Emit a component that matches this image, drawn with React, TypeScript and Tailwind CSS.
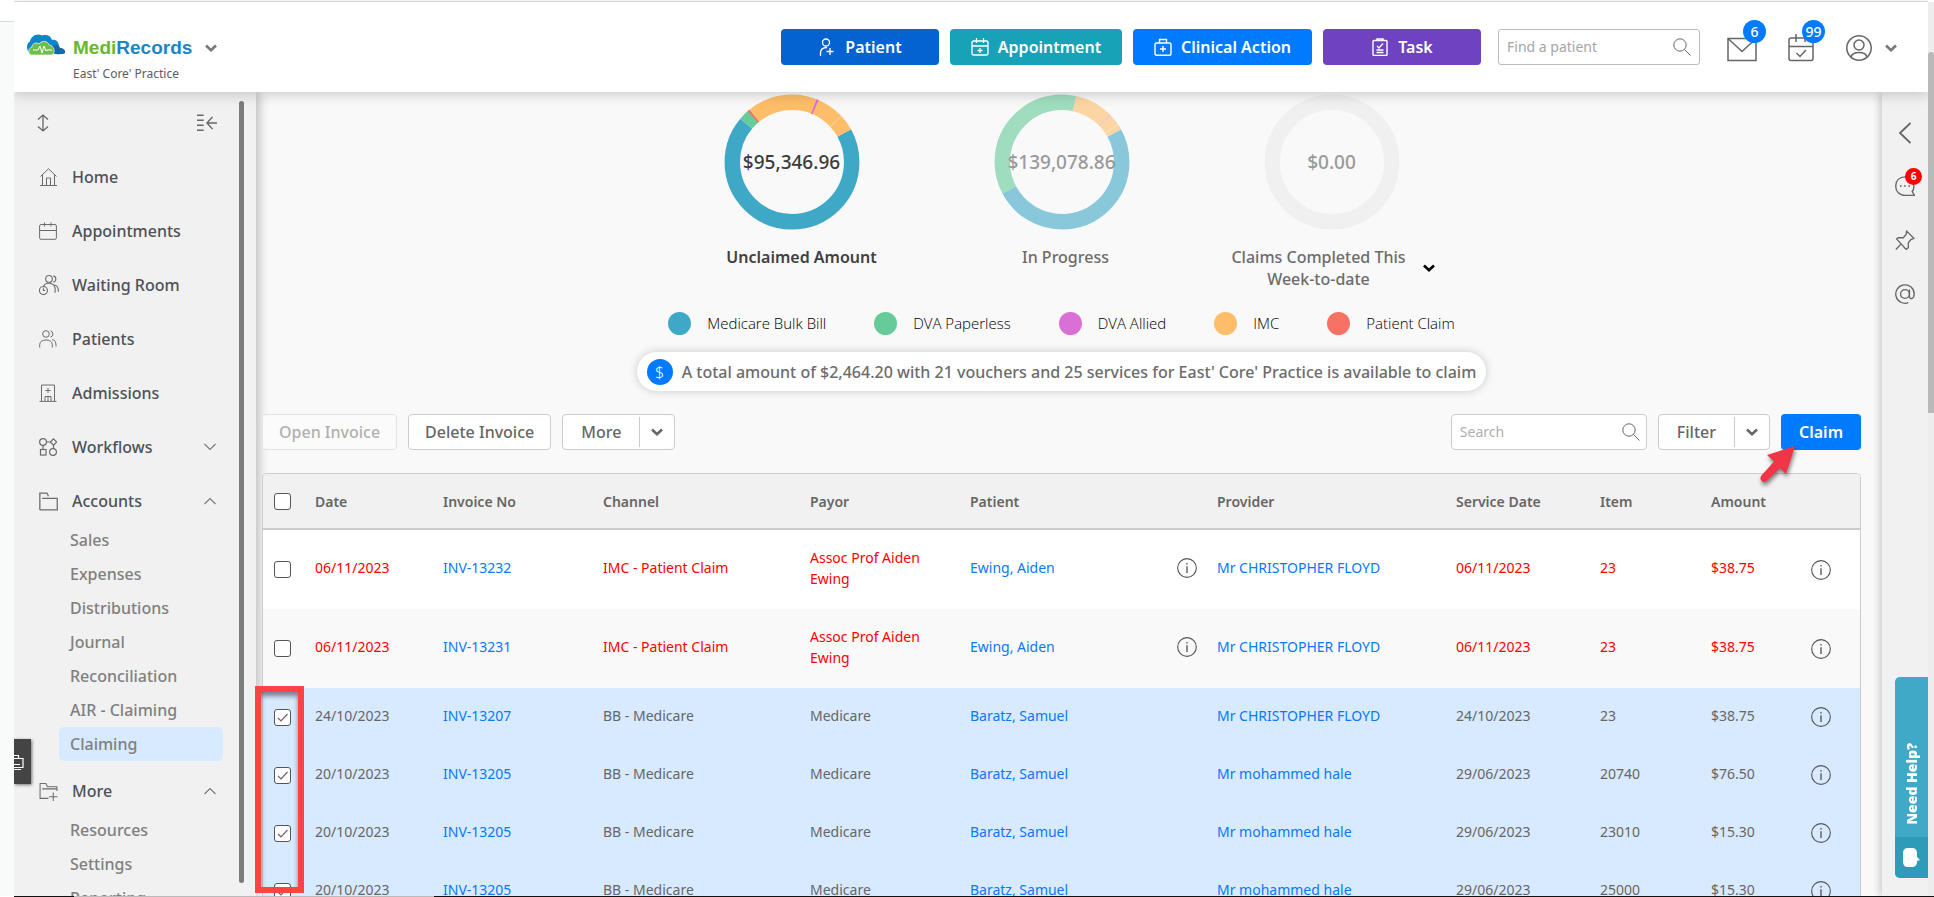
import type { ReactNode } from "react";

type IconProps = {
    size?: number;
    className?: string;
    width?: number;
    children?: ReactNode;
};

type Segment = {
    color: string;
    from: number;
    to: number;
};

type Row = {
    date: string;
    invoice: string;
    channel: string;
    payor: string;
    patient: string;
    provider: string;
    serviceDate: string;
    item: string;
    amount: string;
    alert?: boolean;
    checked?: boolean;
};

const colors = {
    bulk: "#40a8c7",
    dva: "#66cb99",
    allied: "#da6fd6",
    imc: "#febe69",
    patient: "#f67265",
};

const legend = [
    { label: "Medicare Bulk Bill", color: colors.bulk },
    { label: "DVA Paperless", color: colors.dva },
    { label: "DVA Allied", color: colors.allied },
    { label: "IMC", color: colors.imc },
    { label: "Patient Claim", color: colors.patient },
];

// degrees, clockwise from the top
const unclaimed: Segment[] = [
    { color: colors.bulk, from: 61, to: 310 },
    { color: colors.dva, from: 310, to: 320 },
    { color: colors.patient, from: 319, to: 321 },
    { color: colors.imc, from: 321, to: 360 },
    { color: colors.imc, from: 0, to: 47 },
    { color: colors.imc, from: 47.3, to: 61 },
    { color: colors.allied, from: 21.5, to: 23.3 },
];

const inProgress: Segment[] = [
    { color: colors.bulk, from: 61, to: 242 },
    { color: colors.dva, from: 242, to: 360 },
    { color: colors.dva, from: 0, to: 12.3 },
    { color: colors.imc, from: 12.3, to: 45.5 },
    { color: colors.allied, from: 45.5, to: 46.3 },
    { color: colors.imc, from: 46.3, to: 56 },
    { color: colors.imc, from: 56.3, to: 61 },
];

const accounts = [
    "Sales",
    "Expenses",
    "Distributions",
    "Journal",
    "Reconciliation",
    "AIR - Claiming",
    "Claiming",
];

const more = ["Resources", "Settings", "Reporting"];

const rows: Row[] = [
    { date: "06/11/2023", invoice: "INV-13232", channel: "IMC - Patient Claim", payor: "Assoc Prof Aiden Ewing", patient: "Ewing, Aiden", provider: "Mr CHRISTOPHER FLOYD", serviceDate: "06/11/2023", item: "23", amount: "$38.75", alert: true },
    { date: "06/11/2023", invoice: "INV-13231", channel: "IMC - Patient Claim", payor: "Assoc Prof Aiden Ewing", patient: "Ewing, Aiden", provider: "Mr CHRISTOPHER FLOYD", serviceDate: "06/11/2023", item: "23", amount: "$38.75", alert: true },
    { date: "24/10/2023", invoice: "INV-13207", channel: "BB - Medicare", payor: "Medicare", patient: "Baratz, Samuel", provider: "Mr CHRISTOPHER FLOYD", serviceDate: "24/10/2023", item: "23", amount: "$38.75", checked: true },
    { date: "20/10/2023", invoice: "INV-13205", channel: "BB - Medicare", payor: "Medicare", patient: "Baratz, Samuel", provider: "Mr mohammed hale", serviceDate: "29/06/2023", item: "20740", amount: "$76.50", checked: true },
    { date: "20/10/2023", invoice: "INV-13205", channel: "BB - Medicare", payor: "Medicare", patient: "Baratz, Samuel", provider: "Mr mohammed hale", serviceDate: "29/06/2023", item: "23010", amount: "$15.30", checked: true },
    { date: "20/10/2023", invoice: "INV-13205", channel: "BB - Medicare", payor: "Medicare", patient: "Baratz, Samuel", provider: "Mr mohammed hale", serviceDate: "29/06/2023", item: "25000", amount: "$15.30", checked: true },
];

function Icon({ size = 18, width = 1, className = "", children }: IconProps) {
    return (
        <svg
            width={size}
            height={size}
            viewBox="0 0 18 18"
            fill="none"
            stroke="currentColor"
            strokeWidth={width}
            className={`shrink-0 ${className}`}
        >
            {children}
        </svg>
    );
}

function Chevron({ up, bold, className = "" }: { up?: boolean; bold?: boolean; className?: string }) {
    return (
        <svg
            width="14"
            height="10"
            viewBox="0 0 14 10"
            fill="none"
            stroke="currentColor"
            strokeWidth={bold ? 2.6 : 1.1}
            className={`shrink-0 ${className}`}
        >
            {bold ? (
                <path d="M2 2.5 7 7.2l5-4.7" />
            ) : (
                <path d={up ? "M1.5 8 7 2.5 12.5 8" : "M1.5 2 7 7.5 12.5 2"} />
            )}
        </svg>
    );
}

function SearchIcon() {
    return (
        <Icon className="text-[#666]">
            <circle cx="7" cy="7" r="6.2" />
            <path d="m11.5 11.5 6 6" />
        </Icon>
    );
}

function InfoIcon() {
    return (
        <Icon size={20} className="text-[#555]">
            <circle cx="9" cy="9" r="8.4" />
            <path d="M9 7.4v6M9 4.4v1.5" strokeWidth="1.2" />
        </Icon>
    );
}

function Donut({ amount, segments, faded }: { amount: string; segments: Segment[]; faded?: boolean }) {
    return (
        <div className="grid size-[136px] place-items-center *:[grid-area:1/1]">
            <svg
                viewBox="0 0 136 136"
                className={`size-full -rotate-90 ${faded ? "opacity-60" : ""}`}
                fill="none"
                strokeWidth="15.5"
            >
                {segments.length === 0 && (
                    <circle cx="68" cy="68" r="59.7" stroke="#ebebeb" />
                )}
                {segments.map((s, i) => (
                    <circle
                        key={i}
                        cx="68"
                        cy="68"
                        r="59.7"
                        stroke={s.color}
                        pathLength={360}
                        strokeDasharray={`${s.to - s.from} 360`}
                        strokeDashoffset={-s.from}
                    />
                ))}
            </svg>
            <span className={`text-[19px] ${faded ? "text-[#999]" : "text-[#3c3c3c]"}`}>{amount}</span>
        </div>
    );
}

function Checkbox({ label, checked }: { label: string; checked?: boolean }) {
    return (
        <label className="ml-[11px] grid size-[17px] *:[grid-area:1/1]">
            <input
                type="checkbox"
                aria-label={label}
                defaultChecked={checked}
                className="peer size-[17px] appearance-none rounded-[3px] border border-[#555] bg-white"
            />
            <svg
                viewBox="0 0 17 17"
                fill="none"
                stroke="#666"
                strokeWidth="1.2"
                className="pointer-events-none invisible peer-checked:visible"
            >
                <path d="m4 9 3 3 6.500-7" />
            </svg>
        </label>
    );
}

function NavItem({ label, icon, open }: { label: string; icon: ReactNode; open?: boolean }) {
    return (
        <a href="#" className="flex h-[54px] items-center pr-[22px] pl-[25px] text-[#4c5257]">
            <span className="w-[33px] text-[#6c6c6c]">{icon}</span>
            <span className="grow">{label}</span>
            {open !== undefined && <Chevron up={open} className="text-[#777]" />}
        </a>
    );
}

function SubNav({ items, active }: { items: string[]; active?: string }) {
    return (
        <ul className="-mt-[5px] pr-4 pl-[45px]">
            {items.map((item) => (
                <li key={item}>
                    <a
                        href="#"
                        className={`flex h-[34px] items-center rounded-[5px] pl-[11px] text-[#808080] ${item === active ? "bg-[#d8eaff]" : ""}`}
                    >
                        {item}
                    </a>
                </li>
            ))}
        </ul>
    );
}

function Logo() {
    return (
        <svg width="40" height="22" viewBox="0 0 40 22" className="shrink-0">
            <path d="M4 19C0 17 0 9 4 7.5 5 2 11-1 16 1.5 21 0 25 2 26 6c4-1 6 2 7 5l-8 8z" fill="#0d86cc" />
            <path d="M22 19c1-3 2-5 5-6 2-3 6-3 7 1 3 0 6 2 5 5-1 2-14 1-17 0z" fill="#1467a8" />
            <path d="M5 21c-3-1-3-7 1-8 0-4 5-5 7-3 3-4 9-3 10 1 5 0 7 8 3 10z" fill="#6cc04a" stroke="#fff" strokeWidth=".7" />
            <path d="M7 16h5l2-4 2 7 2-7 2 5 1-1h5" fill="none" stroke="#fff" strokeWidth="1" />
        </svg>
    );
}

function Header() {
    const button = "flex h-9 items-center justify-center gap-[9px] rounded-[4px] text-base font-semibold text-white";
    return (
        <header className="relative z-20 flex h-[91px] shrink-0 items-start border-t border-[#d5d9d9] bg-white shadow-[0_3px_12px_rgba(0,0,0,0.18)]">
            <div className="flex grow items-start pt-8 pl-3">
                <Logo />
                <div className="ml-[7px] flex flex-col text-[#5c5c5c]">
                    <button className="flex h-7 items-center gap-3">
                        <span className="font-['Liberation_Sans',sans-serif] text-[19px] font-bold text-[#1c86c4]">
                            <span className="text-[#65b92f]">Medi</span>Records
                        </span>
                        <Chevron bold className="text-[#777]" />
                    </button>
                    <span className="text-xs leading-6 font-normal">East' Core' Practice</span>
                </div>
            </div>
            <div className="flex gap-[11px] pt-[27px]">
                <button className={`${button} w-[158px] bg-[#0463d1]`}>
                    <Icon width={1.3}>
                        <circle cx="8" cy="4.5" r="3.5" />
                        <path d="M2.5 18v-3c0-4 3-5.5 6.5-5.5M12 10v7M8.5 13.5h7" />
                    </Icon>
                    Patient
                </button>
                <button className={`${button} w-[172px] bg-[#18a2b8]`}>
                    <Icon width={1.3}>
                        <rect x="1" y="3" width="16" height="14" rx="1.5" />
                        <path d="M1 8h16M5.5 0v5M12.5 0v5M9 10v5M6.5 12.5h5" />
                    </Icon>
                    Appointment
                </button>
                <button className={`${button} w-[179px] bg-[#007bff]`}>
                    <Icon width={1.4}>
                        <rect x="1" y="5" width="16" height="12.3" rx="1.5" />
                        <path d="M5.5 5V1.5h7V5M9 8v6M6 11h6" />
                    </Icon>
                    Clinical Action
                </button>
                <button className={`${button} w-[158px] bg-[#6f42c1]`}>
                    <Icon width={1.4}>
                        <rect x="2" y="2.5" width="14" height="15" rx="1" />
                        <path d="M6 3V1h6v2M6 8l2 2 4-4.5M5.5 12h7M5.5 14.5h7" />
                    </Icon>
                    Task
                </button>
            </div>
            <label className="mt-[27px] ml-[17px] flex h-9 w-[202px] items-center rounded-[3px] border border-[#bbb] bg-white px-2">
                <input
                    type="text"
                    aria-label="Find a patient"
                    placeholder="Find a patient"
                    className="min-w-0 grow text-sm font-normal outline-none placeholder:text-[#a5a5a5]"
                />
                <SearchIcon />
            </label>
            <div className="flex items-center pt-8 pr-[30px] pl-[27px] text-[#666]">
                <button aria-label="Messages" className="relative">
                    <svg width="30" height="28" viewBox="0 0 30 28" fill="none" stroke="currentColor" strokeWidth="1.5">
                        <path d="M1 4.5h28v22H1zM1 4.5l14 13 14-13" />
                    </svg>
                    <span className="absolute -top-3.5 left-4 grid size-[23px] place-items-center rounded-full bg-[#007bff] text-sm text-white">6</span>
                </button>
                <button aria-label="Tasks" className="relative ml-[31px]">
                    <svg width="26" height="28" viewBox="0 0 26 28" fill="none" stroke="currentColor" strokeWidth="1.5">
                        <rect x="1" y="4" width="24" height="22.5" rx="2" />
                        <path d="M1 12.5h24M8 0v8M17 0v8M8.5 19l3.5 3.5 6-6.5" />
                    </svg>
                    <span className="absolute -top-3.5 left-3.5 grid size-[23px] place-items-center rounded-full bg-[#007bff] text-sm text-white">99</span>
                </button>
                <button aria-label="Profile" className="ml-8 flex items-center gap-3">
                    <svg width="26" height="28" viewBox="0 0 26 28" fill="none" stroke="currentColor" strokeWidth="1.5">
                        <circle cx="13" cy="14" r="12.2" />
                        <circle cx="13" cy="11" r="5" />
                        <path d="M5 23c1-4 4-4.5 8-4.5s7 .5 8 4.5" />
                    </svg>
                    <Chevron bold className="text-[#777]" />
                </button>
            </div>
        </header>
    );
}

function Sidebar() {
    return (
        <aside className="relative z-10 flex w-[242px] shrink-0 bg-[#f1f1f1] shadow-[3px_0_10px_rgba(0,0,0,0.25)]">
            <nav className="w-[225px] overflow-hidden text-base">
                <div className="flex h-[58px] items-center justify-between pt-1 pr-[22px] pl-5 text-[#666]">
                    <button aria-label="Expand all">
                        <Icon width={1.3}>
                            <path d="M9 1v16M4 5.5 9 1l5 4.5M4 12.5 9 17l5-4.5" />
                        </Icon>
                    </button>
                    <button aria-label="Collapse menu">
                        <Icon size={20} width={1.3}>
                            <path d="M0 2h6M0 6.5h6M0 11h6M0 15.5h6M18 9H9.5M14 3.5 9 9l5 5.5" />
                        </Icon>
                    </button>
                </div>
                <NavItem
                    label="Home"
                    icon={
                        <Icon>
                            <path d="M1 17.5h17M1.5 8.5 9.5.8l8 7.7M3.5 7v10M15.5 7v10M7.5 17v-7h4v7" />
                        </Icon>
                    }
                />
                <NavItem
                    label="Appointments"
                    icon={
                        <Icon>
                            <rect x=".6" y="2.5" width="16.8" height="14.8" rx="1.5" />
                            <path d="M.6 8.5h16.8M5.5.5v4M12 .5v4" />
                        </Icon>
                    }
                />
                <NavItem
                    label="Waiting Room"
                    icon={
                        <Icon size={20}>
                            <circle cx="9" cy="3.5" r="3" />
                            <path d="M13 .8a2.9 2.9 0 0 1 0 5.6M4 11c0-5 10-5 10.5 1v4M14 9c3 .5 3.5 2.5 3.5 6" />
                            <circle cx="4" cy="14" r="3.6" />
                            <path d="M4 12v2h1.5" />
                        </Icon>
                    }
                />
                <NavItem
                    label="Patients"
                    icon={
                        <Icon>
                            <circle cx="7" cy="4" r="3.3" />
                            <path d="M11.5.9a3.2 3.2 0 0 1 0 6.2M.7 17.5v-3c0-6 12.6-6 12.6 0v3M13 9.5c3 .5 4 2.5 4 6v1" />
                        </Icon>
                    }
                />
                <NavItem
                    label="Admissions"
                    icon={
                        <Icon>
                            <path d="M.5 17.4h17M2.5 17V1h13v16M9 4v5M6.5 6.5h5M6 17v-4.5h6V17M9 12.5V17" />
                        </Icon>
                    }
                />
                <NavItem
                    label="Workflows"
                    open={false}
                    icon={
                        <Icon width={1.2}>
                            <circle cx="4" cy="4" r="3.4" />
                            <path d="m14.5.8 3.2 3.2-3.2 3.2L11.3 4zM7.4 4h4M4 7.4V11M14.5 7.2v3" />
                            <rect x="1.5" y="11.5" width="5.5" height="5.5" />
                            <circle cx="14" cy="14" r="3.4" />
                        </Icon>
                    }
                />
                <NavItem
                    label="Accounts"
                    open
                    icon={
                        <Icon size={19} width={1.2}>
                            <path d="M.8 17V1h6.7l1.5 3M.8 17h16.5V6H3" />
                        </Icon>
                    }
                />
                <SubNav items={accounts} active="Claiming" />
                <div className="pt-[3px]">
                    <NavItem
                        label="More"
                        open
                        icon={
                            <Icon size={19}>
                                <path d="M9 15.5H1v-14h5.5l1.5 3h9v4M3 6.5h14M13.5 10v8M9.5 14h8" />
                            </Icon>
                        }
                    />
                    <SubNav items={more} />
                </div>
            </nav>
            {/* scroll bar */}
            <div className="mt-[9px] mb-[13px] w-[5px] rounded-full bg-[#7c7c7c]" />
            {/* remote screen tab, half tucked behind the page edge */}
            <button
                aria-label="Screen share"
                className="absolute bottom-28 left-0 grid h-[45px] w-[17px] place-items-center bg-[#444] text-white shadow-[1px_1px_3px_rgba(0,0,0,0.5)]"
            >
                <svg width="17" height="20" viewBox="0 0 17 20" fill="none" stroke="currentColor" strokeWidth="1.2">
                    <path d="M0 3.5h4.5v3M0 6.5h9v9H0M0 12.5h6M0 17.5h7" />
                </svg>
            </button>
        </aside>
    );
}

function Summary() {
    return (
        <section className="flex flex-col items-center pt-0.5">
            <div className="flex text-base">
                <div className="flex w-[270px] flex-col items-center gap-4">
                    <Donut amount="$95,346.96" segments={unclaimed} />
                    <span className="pl-5 leading-[22px] font-semibold text-[#404040]">Unclaimed Amount</span>
                </div>
                <div className="flex w-[270px] flex-col items-center gap-4">
                    <Donut amount="$139,078.86" segments={inProgress} faded />
                    <span className="pl-2 leading-[22px] text-[#6c6c6c]">In Progress</span>
                </div>
                <div className="flex w-[270px] flex-col items-center gap-4">
                    <Donut amount="$0.00" segments={[]} faded />
                    <button className="flex items-center gap-4 pl-1 leading-[22px] text-[#6c6c6c]">
                        <span>
                            Claims Completed This
                            <br />
                            Week-to-date
                        </span>
                        <Chevron bold className="text-black" />
                    </button>
                </div>
            </div>
            <ul className="mt-[21px] flex gap-12 font-['Open_Sans',sans-serif] text-[15px] leading-6 font-light text-black">
                {legend.map((l) => (
                    <li key={l.label} className="flex items-center gap-4">
                        <span className="size-[23px] rounded-full" style={{ backgroundColor: l.color }} />
                        {l.label}
                    </li>
                ))}
            </ul>
            <p className="mt-[17px] flex h-[39px] items-center gap-[9px] rounded-full bg-white px-2.5 text-base text-[#6c6c6c] shadow-[0_0_10px_rgba(0,0,0,0.2)]">
                <span className="grid size-[26px] place-items-center rounded-full bg-[#007bff] text-base font-light text-white">$</span>
                A total amount of $2,464.20 with 21 vouchers and 25 services for East' Core' Practice is available to claim
            </p>
        </section>
    );
}

function SplitButton({ label }: { label: string }) {
    return (
        <div className="flex h-9 items-center rounded-[4px] border border-[#ccc] bg-white text-[#666]">
            <button className="h-full px-[18px]">{label}</button>
            <span className="h-[30px] w-px bg-[#ccc]" />
            <button aria-label={`${label} options`} className="h-full px-2.5">
                <Chevron bold />
            </button>
        </div>
    );
}

function Toolbar() {
    return (
        <div className="mt-[23px] flex items-center gap-[11px] text-base">
            <button disabled className="h-9 rounded-[4px] border border-[#e2e2e2] bg-[#fbfbfb] px-4 text-[#b0b0b0]">
                Open Invoice
            </button>
            <button className="h-9 rounded-[4px] border border-[#ccc] bg-white px-4 text-[#666]">Delete Invoice</button>
            <SplitButton label="More" />
            <label className="ml-auto flex h-9 w-[196px] items-center rounded-[4px] border border-[#ccc] bg-white pr-1.5 pl-2">
                <input
                    type="text"
                    aria-label="Search"
                    placeholder="Search"
                    className="min-w-0 grow text-sm font-normal outline-none placeholder:text-[#b0b0b0]"
                />
                <SearchIcon />
            </label>
            <SplitButton label="Filter" />
            <div className="relative">
                <button className="h-9 rounded-[4px] bg-[#007bff] px-[18px] font-semibold text-white">Claim</button>
                <svg
                    width="42"
                    height="44"
                    viewBox="0 0 42 44"
                    className="pointer-events-none absolute top-8 -left-6 z-10 drop-shadow-[1px_3px_2px_rgba(0,0,0,0.5)]"
                >
                    <path d="M38 0 29 28l-6-6L9.5 35c-4 3-8-2-5-5.5L17 15.5 10 9z" fill="#f23546" />
                </svg>
            </div>
        </div>
    );
}

function ClaimTable() {
    return (
        <div className="relative mt-[23px]">
            <div className="overflow-hidden rounded-t-[5px] border border-b-0 border-[#ccc]">
                <table className="w-full table-fixed border-separate border-spacing-0 text-left text-sm leading-[21px] font-normal">
                    <colgroup>
                        <col className="w-[52px]" />
                        <col className="w-[128px]" />
                        <col className="w-[160px]" />
                        <col className="w-[207px]" />
                        <col className="w-[160px]" />
                        <col className="w-[247px]" />
                        <col className="w-[239px]" />
                        <col className="w-[144px]" />
                        <col className="w-[111px]" />
                        <col className="w-[100px]" />
                        <col className="w-[50px]" />
                    </colgroup>
                    <thead className="bg-[#f1f1f1] text-[#666]">
                        <tr className="h-14 *:border-b-2 *:border-[#ccc] *:font-semibold">
                            <th>
                                <Checkbox label="Select all" />
                            </th>
                            <th>Date</th>
                            <th>Invoice No</th>
                            <th>Channel</th>
                            <th>Payor</th>
                            <th>Patient</th>
                            <th>Provider</th>
                            <th>Service Date</th>
                            <th>Item</th>
                            <th>Amount</th>
                            <th aria-label="Details" />
                        </tr>
                    </thead>
                    <tbody>
                        {rows.map((row, i) => (
                            <tr
                                key={i}
                                className={`*:pb-1 *:first:pb-0 *:last:pb-0 ${row.alert ? "h-[79px] text-[#f00] odd:bg-white even:bg-[#f9f9f9]" : "h-[58px] text-[#666]"} ${row.checked ? "bg-[#d8eaff]" : ""}`}
                            >
                                <td>
                                    <Checkbox label={`Select ${row.invoice}`} checked={row.checked} />
                                </td>
                                <td>{row.date}</td>
                                <td>
                                    <a href="#" className="text-[#0a78ff]">{row.invoice}</a>
                                </td>
                                <td>{row.channel}</td>
                                <td className="pr-10">{row.payor}</td>
                                <td>
                                    <div className="flex items-center justify-between pr-5">
                                        <a href="#" className="text-[#0a78ff]">{row.patient}</a>
                                        {row.alert && (
                                            <button aria-label="Patient details">
                                                <InfoIcon />
                                            </button>
                                        )}
                                    </div>
                                </td>
                                <td>
                                    <a href="#" className="text-[#0a78ff]">{row.provider}</a>
                                </td>
                                <td>{row.serviceDate}</td>
                                <td>{row.item}</td>
                                <td>{row.amount}</td>
                                <td>
                                    <button aria-label="Claim details" className="block">
                                        <InfoIcon />
                                    </button>
                                </td>
                            </tr>
                        ))}
                    </tbody>
                </table>
            </div>
            {/* highlight round the ticked rows */}
            <div className="pointer-events-none absolute top-[213px] -left-[7px] z-20 h-[207px] w-[49px] border-6 border-[#ff4242] shadow-[inset_0_4px_5px_rgba(0,0,0,0.45)]" />
        </div>
    );
}

function RightRail() {
    return (
        <aside className="relative z-10 flex w-[46px] shrink-0 flex-col items-center bg-[#f1f1f1] text-[#666] shadow-[-2px_0_8px_rgba(0,0,0,0.2)]">
            <button aria-label="Open panel" className="mt-[30px]">
                <svg width="14" height="22" viewBox="0 0 14 22" fill="none" stroke="currentColor" strokeWidth="1.8">
                    <path d="M12.5 1 2 11l10.5 10" />
                </svg>
            </button>
            <button aria-label="Chat" className="relative mt-8">
                <Icon size={20} width={1.2}>
                    <path d="M17.5 17.5H9C4 17.5.6 14 .6 9S4 .8 9 .8 17 4 17 9c0 2-.5 4-1.5 5z" />
                    <path d="M4.5 9H6M8.2 9h1.5M12 9h1.5" />
                </Icon>
                <span className="absolute -top-2 left-2.5 grid size-[17px] place-items-center rounded-full bg-[#f00] text-[10px] font-bold text-white">6</span>
            </button>
            <button aria-label="Pinned" className="mt-[34px]">
                <Icon size={20} width={1.2}>
                    <path d="M10.5 1 17 7.5l-1.5.8-1 .2-2.5 3V16l-2 1.5L1.5 8 3 7h4.5L10 4zM5.5 12.5l-4.7 5" />
                </Icon>
            </button>
            <button aria-label="Mentions" className="mt-[34px]">
                <Icon size={20} width={1.2}>
                    <circle cx="9" cy="9" r="4" />
                    <path d="M13 5v6c0 3.5 4.3 2.5 4.3-2A8.3 8.3 0 1 0 12 16.8" />
                </Icon>
            </button>
            <button className="absolute right-0 bottom-[18px] flex w-[33px] flex-col items-center rounded-l-[5px] bg-[#41a9c8] text-white">
                <span className="rotate-180 pt-3 pb-[66px] text-sm leading-[33px] font-black [writing-mode:vertical-rl]">Need Help?</span>
                <span className="grid h-[41px] w-full place-items-center rounded-bl-[5px] bg-[#2e9cb8]">
                    <svg width="17" height="19" viewBox="0 0 17 19" fill="#fff">
                        <path d="M5 0h4c3 0 5 2 5 5v4l3 3-3 1v1c0 3-2 5-5 5H5c-3 0-5-2-5-5V5c0-3 2-5 5-5z" />
                    </svg>
                </span>
            </button>
        </aside>
    );
}

export default function App() {
    return (
        <div className="flex h-screen flex-col overflow-hidden bg-white font-['Noto_Sans',sans-serif] font-medium">
            <div className="flex min-h-0 grow">
                <div className="mt-[21px] w-3.5 shrink-0 border-t border-[#d5d9d9] bg-[#f8fbfa]" />
                <div className="flex min-w-0 grow flex-col overflow-hidden pt-px">
                    <Header />
                    <div className="flex min-h-0 grow bg-[#f9f9f9]">
                        <Sidebar />
                        <main className="relative z-10 min-w-0 grow pr-[21px] pl-1.5">
                            <Summary />
                            <Toolbar />
                            <ClaimTable />
                        </main>
                        <RightRail />
                    </div>
                </div>
                {/* page scroll bar */}
                <div className="mt-0.5 w-1.5 shrink-0 bg-[#ededed] pt-[50px]">
                    <div className="h-[361px] rounded-t-full bg-[#b9b9b9]" />
                </div>
            </div>
            <div className="ml-3.5 flex h-px shrink-0">
                <div className="w-[60px] bg-[#111]" />
                <div className="w-[360px] bg-[#bbb]" />
                <div className="grow bg-[#111]" />
            </div>
        </div>
    );
}
